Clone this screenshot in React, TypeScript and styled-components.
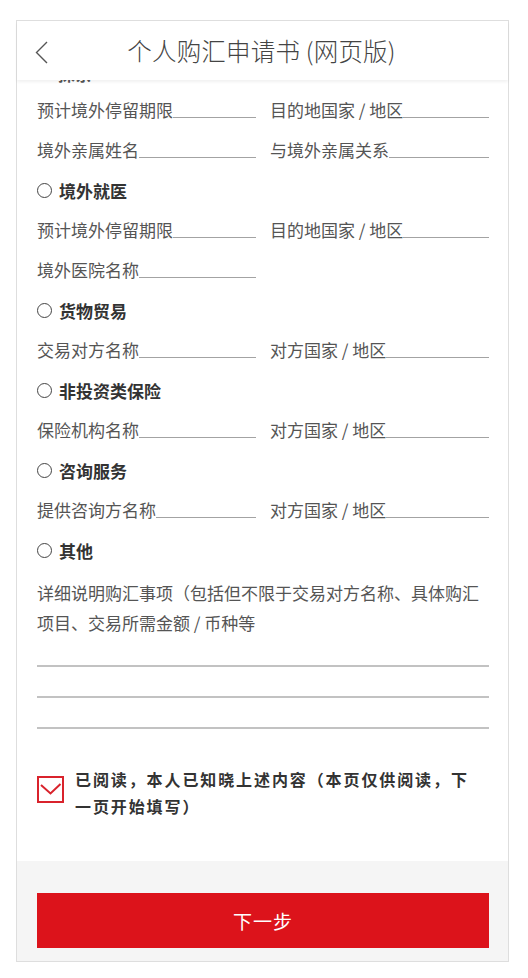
import React from "react";
import styled, { createGlobalStyle } from "styled-components";

const GlobalStyle = createGlobalStyle`
  html, body { margin: 0; padding: 0; background: #ffffff; }
  body { font-family: "Noto Sans CJK SC", "Noto Sans", sans-serif; }
  * { box-sizing: border-box; }
`;

const Frame = styled.div`
  margin: 20px 0 0 16px;
  width: 493px;
  border: 1px solid #dedede;
  background: #ffffff;
  display: flex;
  flex-direction: column;
`;

const Header = styled.header`
  position: relative;
  z-index: 1;
  height: 59px;
  display: flex;
  align-items: center;
  justify-content: center;
  background: #ffffff;
  box-shadow: 0 2px 3px rgba(0, 0, 0, 0.06);
`;

const Back = styled.div`
  position: absolute;
  left: 18px;
  top: 20px;
  width: 13px;
  height: 23px;
  display: flex;
`;

const Title = styled.h1`
  margin: 0;
  font-size: 24.5px;
  font-weight: 300;
  color: #444444;
  letter-spacing: 0.2px;
  transform: translateX(-1px);
`;

const Body = styled.div`
  padding: 0 19px 0 20px;
  display: flex;
  flex-direction: column;
`;

const Clip = styled.div`
  height: 10px;
  overflow: hidden;
  padding-left: 21px;
`;

const ClipText = styled.div`
  margin-top: -15px;
  font-size: 17px;
  line-height: 17px;
  font-weight: 700;
  color: #555;
`;

const Row = styled.div`
  height: 40px;
  display: grid;
  grid-template-columns: 219px 219px;
  column-gap: 14px;
  align-items: center;
`;

const Field = styled.div`
  display: flex;
  align-items: flex-end;
  font-size: 17px;
  line-height: 22px;
  color: #555555;
  white-space: nowrap;
`;

const Blank = styled.span`
  flex: 1;
  height: 4px;
  border-bottom: 1px solid #a3a3a3;
  margin-bottom: 3px;
`;

const Heading = styled.div`
  height: 40px;
  display: flex;
  align-items: center;
  gap: 7px;
  font-size: 17px;
  font-weight: 700;
  color: #333333;
`;

const Radio = styled.span`
  width: 15px;
  height: 15px;
  border: 1.5px solid #444;
  border-radius: 50%;
  flex: none;
`;

const Para = styled.p`
  margin: 8px 0 0;
  font-size: 17px;
  line-height: 30px;
  color: #555555;
`;

const Lines = styled.div`
  padding-top: 27px;
  display: grid;
  row-gap: 29px;
`;

const Line = styled.div`
  height: 2px;
  background: #c2c2c2;
`;

const Agree = styled.div`
  margin: 37px 0 41px;
  display: flex;
  align-items: flex-start;
  gap: 11px;
`;

const Box = styled.span`
  margin-top: 10px;
  width: 27px;
  height: 27px;
  border: 2px solid #d9232c;
  flex: none;
  display: flex;
`;

const AgreeText = styled.div`
  padding-right: 12px;
  font-size: 16px;
  line-height: 27px;
  font-weight: 700;
  letter-spacing: 1.9px;
  color: #333333;
`;

const Footer = styled.div`
  background: #f5f5f5;
  padding: 32px 19px 13px 20px;
`;

const Button = styled.button`
  width: 100%;
  height: 55px;
  border: none;
  border-radius: 0;
  background: #dc131b;
  color: #ffffff;
  font-family: "Noto Sans CJK SC", "Noto Sans", sans-serif;
  font-size: 19px;
  letter-spacing: 1px;
  cursor: pointer;
`;

const F = ({ label }: { label: string }) => (
  <Field>
    {label}
    <Blank />
  </Field>
);

const H = ({ text }: { text: string }) => (
  <Heading>
    <Radio />
    {text}
  </Heading>
);

export default function App() {
  return (
    <>
      <GlobalStyle />
      <Frame>
        <Header>
          <Back>
            <svg width="13" height="23" viewBox="0 0 13 23">
              <polyline points="12,1 1.5,11.5 12,22" fill="none" stroke="#555" strokeWidth="1.4" />
            </svg>
          </Back>
          <Title>个人购汇申请书 (网页版)</Title>
        </Header>
        <Body>
          <Clip>
            <ClipText>探亲</ClipText>
          </Clip>
          <Row>
            <F label="预计境外停留期限" />
            <F label="目的地国家 / 地区" />
          </Row>
          <Row>
            <F label="境外亲属姓名" />
            <F label="与境外亲属关系" />
          </Row>
          <H text="境外就医" />
          <Row>
            <F label="预计境外停留期限" />
            <F label="目的地国家 / 地区" />
          </Row>
          <Row>
            <F label="境外医院名称" />
          </Row>
          <H text="货物贸易" />
          <Row>
            <F label="交易对方名称" />
            <F label="对方国家 / 地区" />
          </Row>
          <H text="非投资类保险" />
          <Row>
            <F label="保险机构名称" />
            <F label="对方国家 / 地区" />
          </Row>
          <H text="咨询服务" />
          <Row>
            <F label="提供咨询方名称" />
            <F label="对方国家 / 地区" />
          </Row>
          <H text="其他" />
          <Para>详细说明购汇事项（包括但不限于交易对方名称、具体购汇项目、交易所需金额 / 币种等</Para>
          <Lines>
            <Line />
            <Line />
            <Line />
          </Lines>
          <Agree>
            <Box>
              <svg width="23" height="23" viewBox="0 0 23 23">
                <polyline points="2,7 11.5,15.5 21.5,6" fill="none" stroke="#d9232c" strokeWidth="2" />
              </svg>
            </Box>
            <AgreeText>已阅读，本人已知晓上述内容（本页仅供阅读，下一页开始填写）</AgreeText>
          </Agree>
        </Body>
        <Footer>
          <Button>下一步</Button>
        </Footer>
      </Frame>
    </>
  );
}
